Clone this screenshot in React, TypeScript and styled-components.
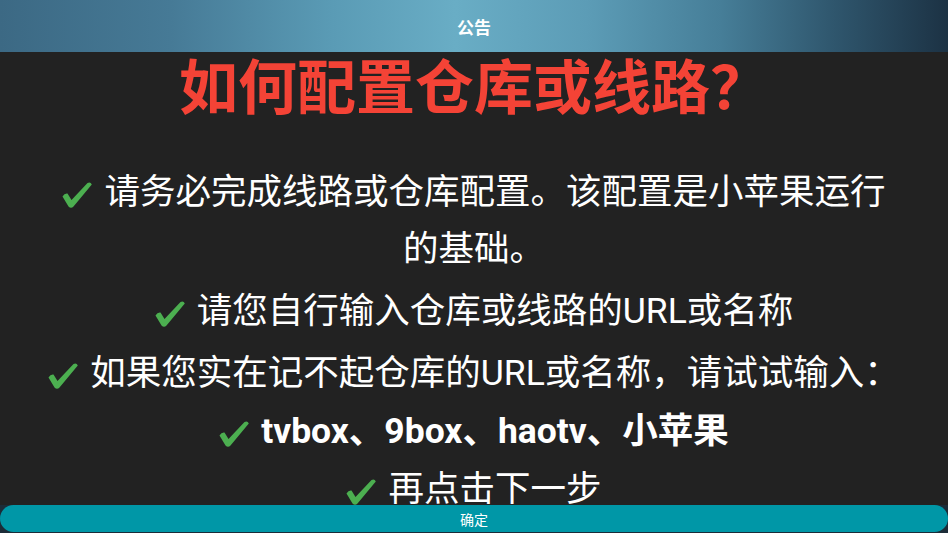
import React from 'react';
import styled, { createGlobalStyle } from 'styled-components';

const GlobalStyle = createGlobalStyle`
  html, body {
    margin: 0;
    padding: 0;
    height: 100%;
    background: #1c2c38;
  }
  #root {
    height: 100%;
  }
  * {
    box-sizing: border-box;
  }
`;

const Screen = styled.div`
  height: 100vh;
  display: flex;
  flex-direction: column;
  overflow: hidden;
  background: #1c2c38;
  font-family: Roboto, 'Noto Sans CJK SC', sans-serif;
`;

const Header = styled.header`
  height: 52px;
  flex-shrink: 0;
  display: flex;
  align-items: center;
  justify-content: center;
  background: linear-gradient(
    90deg,
    #3c6984 0%,
    #467a96 18%,
    #5a9bb5 35%,
    #69adc5 48%,
    #5c9cb6 62%,
    #467e98 76%,
    #2f566d 88%,
    #1c3244 100%
  );
`;

const HeaderTitle = styled.h1`
  margin: 0;
  color: #ffffff;
  font-size: 17px;
  font-weight: 700;
  font-family: 'Noto Sans CJK SC', sans-serif;
`;

const Content = styled.main`
  flex: 1;
  min-height: 0;
  overflow: hidden;
  background: #222222;
  padding: 0 16px;
  text-align: center;
`;

const Title = styled.h2`
  margin: 0;
  color: #f44336;
  font-size: 59px;
  line-height: 64px;
  font-weight: 700;
  font-family: 'Noto Sans CJK SC', sans-serif;
`;

const Notes = styled.div`
  margin-top: 48px;
  display: flex;
  flex-direction: column;
`;

const Note = styled.p<{ $bold?: boolean; $gap: number }>`
  margin: ${(p) => p.$gap}px 0 0;
  color: #ffffff;
  font-size: 35.5px;
  line-height: 57px;
  font-weight: ${(p) => (p.$bold ? 700 : 400)};
  font-family: Roboto, 'Noto Sans CJK SC', sans-serif;
`;

const CheckIcon = styled.svg`
  width: 30px;
  height: 26px;
  margin-right: 12px;
  vertical-align: -4px;
  fill: #4caf50;
`;

const Check: React.FC = () => (
  <CheckIcon viewBox="0 0 30 26" aria-hidden="true">
    <path d="M0.5 14.5 Q2.5 11 5.5 11.5 L9.5 18 L25.5 1 Q28.5 -0.5 29.8 2.5 L11.5 24.5 Q9 27 6.5 24.5 Z" />
  </CheckIcon>
);

const Footer = styled.div`
  flex-shrink: 0;
  height: 28px;
`;

const ConfirmButton = styled.button`
  display: block;
  width: 100%;
  height: 27px;
  border: none;
  border-radius: 14px;
  background: #0097a7;
  color: #ffffff;
  font-size: 14px;
  font-family: 'Noto Sans CJK SC', sans-serif;
  padding: 0;
  cursor: pointer;
`;

const notes: { lines: string[]; bold?: boolean; gap: number }[] = [
  { lines: ['请务必完成线路或仓库配置。该配置是小苹果运行', '的基础。'], gap: 0 },
  { lines: ['请您自行输入仓库或线路的URL或名称'], gap: 5 },
  { lines: ['如果您实在记不起仓库的URL或名称，请试试输入：'], gap: 5 },
  { lines: ['tvbox、9box、haotv、小苹果'], bold: true, gap: 1 },
  { lines: ['再点击下一步'], gap: 1 },
];

const App: React.FC = () => {
  return (
    <>
      <GlobalStyle />
      <Screen>
        <Header>
          <HeaderTitle>公告</HeaderTitle>
        </Header>
        <Content>
          <Title>如何配置仓库或线路？</Title>
          <Notes>
            {notes.map((n) => (
              <Note key={n.lines[0]} $bold={n.bold} $gap={n.gap}>
                <Check />
                {n.lines.map((line, i) => (
                  <React.Fragment key={line}>
                    {i > 0 && <br />}
                    {line}
                  </React.Fragment>
                ))}
              </Note>
            ))}
          </Notes>
        </Content>
        <Footer>
          <ConfirmButton>确定</ConfirmButton>
        </Footer>
      </Screen>
    </>
  );
};

export default App;
